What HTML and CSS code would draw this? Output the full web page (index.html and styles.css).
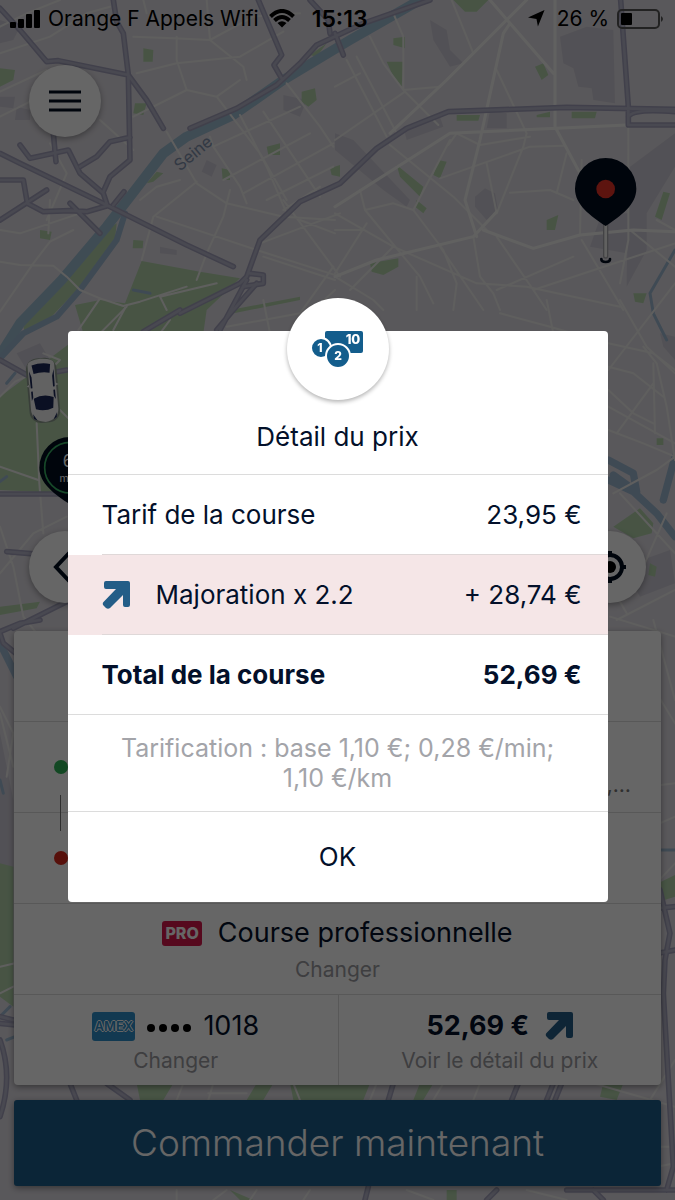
FILE: index.html
```html
<!DOCTYPE html>
<html lang="fr">
<head>
<meta charset="utf-8">
<meta name="viewport" content="width=device-width, initial-scale=1">
<title>Détail du prix</title>
<link rel="stylesheet" href="styles.css">
</head>
<body>
<div class="screen">
  <svg class="map" viewBox="0 0 2025 3600" preserveAspectRatio="xMidYMid slice" aria-hidden="true">
    <defs>
      <g id="highways">
        <path d="M0 25L60 90L140 185L175 182L385 225L390 480L330 530L310 575M340 0L350 65L370 100L385 225L440 300L490 385M160 400L168 485M0 460L60 490L320 615L560 735L700 800M60 435L90 475L205 450L240 520L310 580L320 610M240 500L290 470L330 425L390 412M0 540L70 540L82 610L130 635L210 632L260 635L320 618M0 660L140 570M210 610L300 700M340 615L372 575M570 385L710 325L830 255L900 190L950 135L1090 70L1290 0M775 0L845 165L822 195L845 235M1005 100L1030 165M930 0L985 60L990 100"/>
        <path d="M540 940L720 850L740 830L780 720L900 605L1020 550L1130 445L1220 385L1345 335L1700 322L2025 328M1862 0L1885 320L1885 375L2025 375M1885 350Q1900 325 2025 335M730 860L790 850L790 825L750 820"/>
        <path d="M740 840L660 990M770 850L700 930L650 990M540 930L430 995M0 1080L90 1130L200 1110"/>
        <path d="M0 1482L200 1482M20 1655L200 1670M40 1885L200 1805M0 1895L60 1870L120 1860M0 1900L10 1930L60 1970"/>
        <path d="M0 3050L40 3060M0 3070L45 3075M0 3120Q40 3230 0 3350M210 3250L230 3300M320 3250L390 3300M1180 3250L1165 3300M1555 3250L1535 3300M1660 3250L1640 3300M1685 3250L1665 3300M1105 3560L1095 3600M1490 3570L1460 3600M1780 3570L1810 3600M1980 2670L2010 2800L1995 2880L1990 2980L2020 3500L2000 3570M1700 3570L2025 3570M1865 2765L1900 2780L1950 2900L1960 3000M1860 2750L1920 2730L2025 2720M1975 2860L2025 2850"/>
      </g>
    </defs>
    <rect class="land" width="2025" height="3600"/>

    <g class="block">
      <path d="M0 60L60 80L40 120L0 130ZM0 290L45 290L40 325L0 320ZM50 320L90 330L90 360L45 360ZM850 285L920 300L900 350L850 330ZM620 480L650 495L635 530L605 515ZM480 740L530 750L530 765L480 760Z"/>
      <path d="M1680 110L1760 80L1840 90L1845 310L1780 300L1775 265L1735 260L1720 205L1690 190ZM1290 60L1340 90L1350 150L1390 190L1350 200L1300 120ZM1470 330L1520 340L1520 385L1460 385ZM1425 590L1455 565L1485 580L1495 635L1460 660L1425 620ZM1805 640L1890 640L1880 760L1770 740ZM1005 400L1060 420L1230 600L1220 620L1150 570L1005 450ZM1890 500L2025 400L2025 500L1940 640L1940 750L1880 860L1880 820ZM1210 380L1320 350L1330 380L1220 420Z"/>
      <path d="M1980 1000L2025 1010L2025 1080L1990 1040ZM1870 1700L2010 1650L2025 1750L1920 1790ZM0 2200L40 2400L40 2760L0 2780Z"/>
    </g>

    <g class="park">
      <path d="M430 145L460 150L458 185L430 185ZM0 205L45 210L40 240L0 260ZM905 275L945 265L950 300L925 320L905 305ZM405 310L440 310L430 345L400 340ZM800 440L840 430L840 465L805 465ZM665 505L690 510L690 540L668 540ZM120 690L155 695L150 720L120 715ZM400 720L430 722L428 745L398 745ZM990 505L1020 495L1020 530L995 525Z"/>
      <path d="M425 783L600 815L720 835L620 930L610 1000L560 1200L200 1200L130 1090L250 1000L225 915L300 900L375 910Z"/>
      <path d="M1360 0L1465 0L1430 35L1395 35ZM1180 115L1215 110L1215 145L1180 135ZM1160 185L1210 185L1205 260L1180 230ZM1605 200L1630 190L1645 225L1625 240ZM1370 345L1440 345L1435 362L1370 362ZM1610 345L1650 335L1650 352L1610 352ZM1715 335L1790 335L1785 355L1715 355ZM1315 480L1340 485L1320 535L1300 525ZM1190 495L1270 560L1260 590L1200 530ZM1250 600L1280 625L1270 640L1245 620ZM1640 660L1675 645L1665 690L1640 690ZM1990 575L2010 580L1985 660L1965 650ZM1110 790L1195 775L1195 800L1150 825L1115 815ZM1900 880L1940 880L1930 910L1905 905Z"/>
      <path d="M0 1190L80 1130L290 1020L300 1300L400 1600L200 1480L0 1470ZM0 1820L120 1805L110 1825L0 1845Z"/>
      <path d="M1840 1580L1920 1525L1960 1570L1955 1600L1900 1615ZM1950 1690L1970 1700L1965 1730L1945 1725ZM1970 1315L1990 1315L1990 1335L1970 1335ZM1860 2705L2025 2625L2025 2690L1865 2740ZM0 2590L40 2600L40 3020L0 2990Z"/>
      <path d="M410 3250L520 3250L490 3300L420 3300ZM770 3250L820 3250L790 3300L740 3300ZM870 3250L1110 3250L1090 3300L880 3300ZM1260 3250L1300 3250L1270 3300L1240 3300ZM1810 3250L1870 3250L1850 3300L1800 3290ZM690 3570L760 3600L720 3600ZM1340 3570L1370 3570L1370 3600L1340 3600ZM690 930L900 890L900 900L690 942Z"/>
    </g>
    <path class="block" d="M50 1060L120 1030L150 1080L80 1110Z"/>

    <path class="island" d="M350 670L345 720L240 860L150 955L75 1000L70 980L130 900L250 780L320 690ZM470 515L490 520L460 545L440 550ZM930 165L980 130L950 170Z"/>
    <path class="river" d="M1330 -40L1050 120L850 240L700 345L560 410L490 460L390 590L320 680L185 840L60 970L0 1065"/>
    <g class="stream">
      <path class="arm" d="M375 640L350 720L240 870L170 950L70 1000L0 1075"/>
      <path class="wide" d="M1825 1380L1900 1420L1910 1475L1840 1425M1825 1440L1900 1475L1970 1540L2025 1610M2025 1370L1990 1500M0 1930L50 2030"/>
      <path d="M20 1150L45 1120M0 1445L20 1430M400 870L450 880M0 2340L10 2380M2025 750L1950 880L1960 940L2000 1020M0 3050L30 3020M20 3120L45 3110M1960 2550L2025 2550"/>
    </g>

    <g class="streets minor">
      <path d="M0 80L80 40L180 0M0 160L150 110L260 40L330 20M0 275L140 210M0 350L120 290M400 110L520 115L630 120L760 50L900 40M410 220L530 190L720 170L850 95M530 110L530 180L560 270L650 290L720 240M560 270L400 350M620 0L630 120L730 200L740 240M430 0L440 40M650 290L780 460L860 600M720 345L800 500L860 640M790 335L900 500L960 590M860 250L960 380L1000 440M630 410L640 440L900 320M640 440L720 560L740 610M670 540L930 400M730 580L1000 430M800 600L1000 500M850 630L960 560M500 395L590 550L680 610L850 650L1005 660M540 540L470 560L420 600M690 570L670 650L620 760M470 650L770 750L1020 830M590 545L460 650L425 780M150 430L200 520L140 660M300 360L400 450M0 690L60 700L240 640L320 620M0 785L60 795L160 797L200 830L240 870L300 895L370 918L420 905L560 860M850 600L1020 830M780 730L1020 640M790 770L1005 840M900 660L1005 700M590 840L620 760M650 850L480 890L500 930M340 990L380 915M235 990L300 895M0 935L100 790L150 725L220 690M150 600L145 700"/>
      <path d="M1005 260L1080 220M1110 110L1150 190L1210 270L1315 375M1180 40L1210 110L1210 270L1320 260M1355 0L1420 160M1040 180L1160 410M1070 170L1190 400M1005 420L1215 275M1490 210L1580 400L1570 440L1490 640M1320 535L1590 440L1690 437M1670 580L1700 460M1530 578L1650 570L1720 600M1460 490L1490 640M1345 435L1370 400L1440 435L1590 410M1080 570L1095 630L1260 830L1300 910M1095 630L1180 610L1240 630L1330 750L1370 850L1360 930M1240 630L1350 420M1170 435L1360 590L1460 690M1420 710L1440 830L1480 880L1500 930M1490 710L1600 870L1640 930M1490 870L1720 770M1600 870L2025 730M1740 700L1745 480M1885 380L1885 720L1860 850M1890 690L2025 800M1745 720L1870 930M1970 660L2025 690M1005 640L1180 740L1430 850L1580 860L1860 920M1005 820L1100 670M1005 690L1090 690M1005 830L1120 900L1150 930M1250 830L1250 930M1320 740L1450 930M1180 740L1050 870"/>
      <path d="M300 1000L380 920M480 1000L510 960M0 1190L45 1145L100 1120M130 1060L180 1080L150 1110M110 1270L118 1450L130 1600M0 1400L115 1440M0 1720L100 1600L200 1550M0 1580L40 1700L70 1850L110 1900M170 1220L250 1300M680 980L900 940L1000 800M790 900L810 1000M1005 870L940 930L900 1000M1500 940L1650 980L1820 1030M1640 900L1660 1000M1860 900L1940 1040L2025 1120M2025 850L1825 1110M1825 1030L1960 1060L2025 1110M1825 1100L1900 1120L1990 1190M1930 1040L1970 1090L2000 1220L2025 1380M1825 1170L1900 1240L1960 1270M1825 1220L2025 1330M1960 1090L1965 1300M1850 1300L1960 1150M1825 1290L1930 1330L2025 1370M1840 1480L1970 1410L2025 1370M1860 1480L2025 1660M1850 1860L2025 1770M1930 1700L2000 1540M1830 1850L2025 1910M1840 1770L1880 1840"/>
      <path d="M1860 1900L2025 2170M1960 1860L2025 2100M1865 2370L2025 2350M1865 2520L2025 2450M1940 2680L2025 2590M0 2120L40 2200L20 2330M0 2140L40 2300M0 2900L45 2890M0 2980L40 2960M550 3250L530 3300M640 3250L625 3300M625 3280L740 3280M880 3250L900 3300M1130 3250L1110 3300M1330 3250L1300 3300M1440 3250L1420 3300M1780 3250L2025 3320M1950 3300L2025 3180M1970 3440L2025 3440M1970 3500L2025 3490M530 3570L530 3600M640 3600L680 3570M750 3600L770 3570M910 3600L930 3570M1220 3570L1300 3600M1580 3570L1700 3600"/>
    </g>
    <g class="streets major">
      <path d="M1005 620L1350 400L1880 375M1665 0L1665 380L1740 520M1580 0L1340 240L1170 400M1470 0L1530 70L1660 220M1530 70L1510 100L1440 420L1395 600L1430 710M1005 830L1130 780L1420 710L1490 635M1450 690L1600 745L1740 705L1900 690L2025 695"/>
    </g>

    <g class="road-edge"><use href="#highways"/></g>
    <g class="road-core"><use href="#highways"/></g>
    <text class="river-name" transform="translate(540 515) rotate(-40)">Seine</text>

    <g transform="translate(129 1170) rotate(-5)">
      <rect class="car-shadow" x="-46" y="-96" width="92" height="194" rx="34"/>
      <path class="car-body" d="M-40 -78Q-38 -92 0 -94Q38 -92 40 -78L41 60Q38 92 0 96Q-38 92 -41 60ZM-39 -20L-48 -14L-39 -10ZM39 -20L48 -14L39 -10Z"/>
      <path class="car-glass" d="M-28 -76Q0 -84 28 -76L24 -50Q0 -56 -24 -50ZM-30 24Q0 10 30 24L26 56Q0 66 -26 56ZM-37 -60L-31 -40L-31 -8L-36 -8ZM37 -60L31 -40L31 -8L36 -8ZM-36 2L-31 2L-31 20L-36 30ZM36 2L31 2L31 20L36 30ZM-36 70L-24 90L-34 84ZM36 70L24 90L34 84Z"/>
    </g>

    <g>
      <path class="pin-body" d="M210 1311A92 92 0 0 1 302 1403C302 1450 255 1484 210 1513C165 1484 118 1450 118 1403A92 92 0 0 1 210 1311Z"/>
      <circle class="eta-ring" cx="210" cy="1403" r="76"/>
      <text class="eta-value" x="204" y="1402">6</text>
      <text class="eta-unit" x="206" y="1446">min</text>
    </g>

    <g>
      <path class="pin-ring" d="M1804 777Q1804 786 1817 786Q1830 786 1830 777"/>
      <path class="pin-stem-edge" d="M1817 675V768"/>
      <path class="pin-stem" d="M1817 675V768"/>
      <path class="pin-body" d="M1817 474A92 92 0 0 1 1909 566C1909 615 1862 647 1817 678C1772 647 1725 615 1725 566A92 92 0 0 1 1817 474Z"/>
      <circle class="pin-dot" cx="1817" cy="567" r="28"/>
    </g>
  </svg>

  <header class="status">
    <svg class="signal" viewBox="0 0 30 18" aria-hidden="true"><rect y="12" width="6" height="6" rx="1"/><rect x="8" y="9" width="6" height="9" rx="1"/><rect x="16" y="4" width="6" height="14" rx="1"/><rect x="24" y="0" width="6" height="18" rx="1"/></svg>
    <span class="carrier">Orange F Appels Wifi</span>
    <svg class="wifi" viewBox="0 0 26 19" aria-hidden="true"><path d="M1.500 7.500Q13 -3.500 24.500 7.500M5.500 11.500Q13 4.500 20.500 11.500"/><path class="wifi-tip" d="M8.500 14Q13 10.500 17.500 14L13 18.500Z"/></svg>
    <time class="clock">15:13</time>
    <div class="status-end">
      <svg class="nav-arrow" viewBox="0 0 18 18" aria-hidden="true"><path d="M17.500 0L10.500 17.500L9 9.500L0 8Z"/></svg>
      <span>26 %</span>
      <svg class="battery" viewBox="0 0 48 20" aria-hidden="true"><rect class="cell" x="1" y="1" width="41" height="18" rx="4"/><rect x="4" y="4" width="11" height="12" rx="1"/><path class="cap" d="M44 7Q48 10 44 13Z"/></svg>
    </div>
  </header>

  <div class="top-controls">
    <button class="round" type="button" aria-label="Menu"><svg viewBox="0 0 72 72"><path class="burger" d="M20 27H52M20 36H52M20 45H52"/></svg></button>
  </div>

  <main class="bottom">
    <div class="map-controls">
      <button class="round" type="button" aria-label="Retour"><svg viewBox="0 0 72 72"><path class="chevron" d="M42 20L27 36L42 52"/></svg></button>
      <button class="round" type="button" aria-label="Me localiser"><svg viewBox="0 0 72 72"><circle class="target" cx="36" cy="36" r="12"/><path class="target" d="M36 20V25M36 47V52M20 36H25M47 36H52"/><circle cx="36" cy="36" r="6"/></svg></button>
    </div>
    <section class="card">
      <div class="card-row"></div>
      <div class="card-row route">
        <i class="stop start"></i><i class="link"></i><span class="address">,…</span>
      </div>
      <div class="card-row route"><i class="stop end"></i></div>
      <button class="card-row option" type="button">
        <span class="line"><b class="pro">PRO</b><span>Course professionnelle</span></span>
        <span class="hint">Changer</span>
      </button>
      <div class="split">
        <button class="card-row option" type="button">
          <span class="line near"><span class="amex">AMEX</span><svg class="dots" viewBox="0 0 46 10" aria-hidden="true"><circle cx="5" cy="5" r="4"/><circle cx="17" cy="5" r="4"/><circle cx="29" cy="5" r="4"/><circle cx="41" cy="5" r="4"/></svg><span>1018</span></span>
          <span class="hint">Changer</span>
        </button>
        <button class="card-row option" type="button">
          <span class="line"><strong>52,69 €</strong><svg class="surge" viewBox="0 0 28 28" aria-hidden="true"><path d="M4 0H26Q28 0 28 2V24Q28 26 26 26H23Q21 26 21 24V14L8 27Q6 28.500 4 27L1.500 24.500Q0 22.500 1.500 21L14 8H4Q2 8 2 6V2Q2 0 4 0Z"/></svg></span>
          <span class="hint">Voir le détail du prix</span>
        </button>
      </div>
    </section>
    <button class="order" type="button">Commander maintenant</button>
  </main>
</div>

<div class="overlay">
  <section class="dialog" role="dialog" aria-modal="true" aria-labelledby="dialog-title">
    <div class="emblem">
      <svg viewBox="0 0 102 102" aria-hidden="true">
        <rect class="money" x="38" y="33" width="38" height="22" rx="2"/>
        <circle class="money ringed" cx="34" cy="50" r="10"/>
        <circle class="money ringed" cx="51" cy="58" r="12"/>
        <text class="note" x="66" y="46">10</text><text class="coin" x="33" y="54">1</text><text class="coin" x="51" y="62">2</text>
      </svg>
    </div>
    <h1 class="title" id="dialog-title">Détail du prix</h1>
    <dl class="prices">
      <div class="price"><dt>Tarif de la course</dt><dd>23,95 €</dd></div>
      <div class="price raised"><dt><svg class="surge" viewBox="0 0 28 28" aria-hidden="true"><path d="M4 0H26Q28 0 28 2V24Q28 26 26 26H23Q21 26 21 24V14L8 27Q6 28.500 4 27L1.500 24.500Q0 22.500 1.500 21L14 8H4Q2 8 2 6V2Q2 0 4 0Z"/></svg>Majoration x 2.2</dt><dd>+ 28,74 €</dd></div>
      <div class="price total"><dt>Total de la course</dt><dd>52,69 €</dd></div>
    </dl>
    <p class="rates">Tarification : base 1,10 €; 0,28 €/min; 1,10 €/km</p>
    <button class="ok" type="button">OK</button>
  </section>
</div>
</body>
</html>
```
FILE: styles.css
```css
* { box-sizing: border-box; }

body {
  margin: 0;
  font-family: Inter, "Liberation Sans", sans-serif;
  font-size: 26px;
  line-height: 32px;
  color: #03102a;
}

button {
  font: inherit;
  color: inherit;
  border: 0;
  padding: 0;
  background: none;
}

svg { display: block; }

.screen {
  position: relative;
  min-height: 100vh;
  display: flex;
  flex-direction: column;
  overflow: hidden;
}

/* Map */
.map { position: absolute; inset: 0; width: 100%; height: 100%; z-index: -1; }
.map path, .map use { stroke-linejoin: round; stroke-linecap: round; }
.land { fill: #dfdce3; }
.block { fill: #cecbd6; }
.park, .island { fill: #b3d3ab; }
.river { fill: none; stroke: #9fbdd2; stroke-width: 30; }
.stream { fill: none; stroke: #9fb9d2; stroke-width: 9; }
.stream .wide { stroke-width: 22; }
.stream .arm { stroke-width: 18; }
.streets { fill: none; }
.minor { stroke: #eeedec; stroke-width: 6; }
.major { stroke: #f3f3f1; stroke-width: 9; }
.road-edge { fill: none; stroke: #a2a1bb; stroke-width: 17; }
.road-core { fill: none; stroke: #b7b6ca; stroke-width: 8; }
.river-name { font-size: 50px; fill: #8090aa; }
.car-shadow { fill: #8e9c90; }
.car-body { fill: #f4f4f4; }
.car-glass { fill: #1c2858; }
.pin-body { fill: #020d20; }
.pin-dot { fill: #e83226; }
.pin-stem-edge { fill: none; stroke: #a9a8ac; stroke-width: 16; }
.pin-stem { fill: none; stroke: #f2f2f0; stroke-width: 8; }
.pin-ring { fill: none; stroke: #020d20; stroke-width: 8; }
.eta-ring { fill: none; stroke: #39b566; stroke-width: 5; }
.eta-value, .eta-unit { fill: #fff; text-anchor: middle; }
.eta-value { font-size: 50px; }
.eta-unit { font-size: 32px; }

/* Status bar */
.status {
  display: flex;
  align-items: center;
  height: 37px;
  padding: 0 10px;
  font-size: 21px;
  line-height: 24px;
  color: #000;
}
.signal { width: 30px; height: 18px; margin-right: 8px; }
.wifi { width: 26px; height: 19px; margin: 0 17px 0 10px; fill: none; stroke: #000; stroke-width: 4; }
.wifi-tip { fill: #000; stroke: none; }
.clock { font-size: 23px; font-weight: 600; }
.status-end { display: flex; align-items: center; gap: 8px; margin-left: auto; }
.nav-arrow { width: 17px; height: 17px; margin-right: 4px; }
.battery { width: 48px; height: 20px; }
.cell { fill: none; stroke: #555; stroke-width: 2; }
.cap { fill: #555; }

/* Map buttons */
.top-controls { padding: 28px 29px; }
.round {
  width: 72px;
  height: 72px;
  border-radius: 50%;
  background: #fff;
  box-shadow: 0 2px 6px rgba(0, 0, 0, .35);
}
.burger, .chevron, .target { fill: none; stroke: #020d20; stroke-width: 3; }
.chevron, .target { stroke-width: 4; }
.map-controls { display: flex; justify-content: space-between; padding: 0 15px 28px; }

/* Booking panel */
.bottom { margin-top: auto; padding: 0 14px 14px; }
.card {
  border-radius: 4px;
  background: #fff;
  box-shadow: 0 2px 6px rgba(0, 0, 0, .4);
}
.card-row { width: 100%; height: 91px; border-bottom: 1px solid #dcdcdc; }
.route { position: relative; display: flex; align-items: center; padding: 0 30px 0 40px; }
.stop { width: 14px; height: 14px; border-radius: 50%; }
.start { background: #2fb457; }
.end { background: #d92a1c; }
.link { position: absolute; left: 46px; top: 73px; width: 1px; height: 36px; background: #777; }
.address { margin-left: auto; padding-top: 36px; font-size: 21px; color: #777; }
.option { display: flex; flex-direction: column; align-items: center; padding-top: 12px; font-size: 27px; }
.line { display: flex; align-items: center; gap: 16px; height: 34px; }
.near { gap: 11px; }
.hint { margin-top: 8px; font-size: 21px; line-height: 24px; color: #9b9ba1; }
.pro {
  padding: 0 3px;
  border-radius: 3px;
  background: #d8174b;
  color: #fff;
  font-size: 16px;
  line-height: 25px;
  font-weight: 800;
}
.amex {
  width: 43px;
  border-radius: 3px;
  background: #2f8fca;
  color: #2f8fca;
  font-size: 13px;
  line-height: 29px;
  font-weight: 600;
  text-align: center;
  text-shadow: 1px 0 #fff, -1px 0 #fff, 0 1px #fff, 0 -1px #fff;
}
.dots { width: 46px; height: 10px; margin-top: 3px; }
.split { display: grid; grid-template-columns: 1fr 1fr; }
.split .card-row { height: 90px; border-bottom: 0; padding-top: 14px; }
.split .hint { margin-top: 6px; }
.split .card-row + .card-row { border-left: 1px solid #dcdcdc; }
strong, .total { font-weight: 700; }
.surge { width: 28px; height: 28px; fill: #235d87; }
.order {
  width: 100%;
  height: 86px;
  margin-top: 15px;
  border-radius: 3px;
  background: #1c5c8a;
  color: #fff;
  font-size: 37px;
  font-weight: 300;
  box-shadow: 0 2px 6px rgba(0, 0, 0, .4);
}

/* Price dialog */
.overlay {
  position: fixed;
  inset: 0;
  display: flex;
  align-items: center;
  justify-content: center;
  padding-top: 33px;
  background: rgba(0, 0, 0, .6);
}
.dialog {
  position: relative;
  width: 80%;
  border-radius: 4px;
  background: #fff;
}
.emblem {
  position: absolute;
  top: -33px;
  left: 50%;
  width: 102px;
  margin-left: -51px;
  border-radius: 50%;
  background: #fff;
  box-shadow: 0 2px 4px rgba(0, 0, 0, .3);
}
.money { fill: #135d8c; }
.ringed { stroke: #fff; stroke-width: 2; }
.note, .coin { fill: #fff; font-weight: 800; text-anchor: middle; }
.note { font-size: 13px; }
.coin { font-size: 12px; }
.title {
  margin: 0;
  padding: 90px 20px 21px;
  border-bottom: 1px solid #dcdcdc;
  font-size: 26px;
  font-weight: 400;
  text-align: center;
}
.prices { margin: 0; }
.price {
  display: flex;
  align-items: center;
  justify-content: space-between;
  height: 80px;
  padding: 0 26px 0 34px;
  background: linear-gradient(#dfd8d8, #dfd8d8) 34px 100% / 100% 1px no-repeat;
}
.price dt { display: flex; align-items: center; gap: 26px; }
.price dd { margin: 0; }
.raised { background-color: #f5e6e7; }
.total { background: none; border-bottom: 1px solid #dcdcdc; }
.rates {
  margin: 0;
  padding: 18px 50px;
  border-bottom: 1px solid #dcdcdc;
  font-size: 25px;
  line-height: 30px;
  text-align: center;
  color: #a3a4a9;
}
.ok { display: block; width: 100%; height: 90px; }
```
